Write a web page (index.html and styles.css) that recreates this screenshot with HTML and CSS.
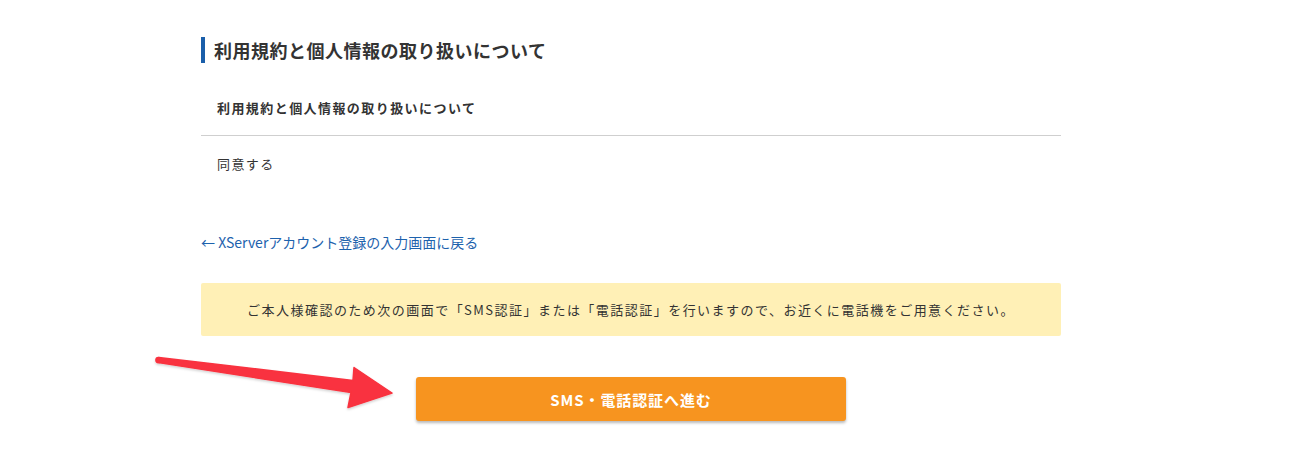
FILE: index.html
```html
<!DOCTYPE html>
<html lang="ja">
<head>
<meta charset="utf-8">
<title>利用規約と個人情報の取り扱いについて</title>
<link rel="stylesheet" href="styles.css">
</head>
<body>
<main class="page">
  <section class="terms">
    <h2 class="section-title">利用規約と個人情報の取り扱いについて</h2>
    <div class="terms-table">
      <div class="terms-row terms-head">利用規約と個人情報の取り扱いについて</div>
      <div class="terms-row terms-value">同意する</div>
    </div>
  </section>
  <a class="back-link" href="#">← XServerアカウント登録の入力画面に戻る</a>
  <div class="notice">ご本人様確認のため次の画面で「SMS認証」または「電話認証」を行いますので、お近くに電話機をご用意ください。</div>
  <div class="actions">
    <button class="submit" type="button">SMS・電話認証へ進む</button>
  </div>
</main>
<svg class="annotation" width="1294" height="475" viewBox="0 0 1294 475" aria-hidden="true">
  <defs>
    <filter id="sh" x="-10%" y="-30%" width="120%" height="160%">
      <feDropShadow dx="0" dy="1.5" stdDeviation="1.2" flood-color="#000" flood-opacity="0.18"/>
    </filter>
  </defs>
  <g filter="url(#sh)" fill="#f9323f" stroke="#f9323f" stroke-width="1.5" stroke-linejoin="round">
    <circle cx="158.5" cy="360" r="2.6"/>
    <polygon points="158.8,357.4 353,380.5 354,367.5 392,393 348,407.5 351,392.5 158.2,362.6"/>
  </g>
</svg>
</body>
</html>
```

FILE: styles.css
```css
html, body {
  margin: 0;
  padding: 0;
  background: #ffffff;
}

body {
  position: relative;
  width: 1294px;
  height: 475px;
  overflow: hidden;
  font-family: "Noto Sans CJK JP", "Noto Sans", "Liberation Sans", sans-serif;
  color: #333333;
}

.page {
  width: 860px;
  margin-left: 201px;
  padding-top: 37px;
  display: flex;
  flex-direction: column;
}

.section-title {
  margin: 0;
  height: 26px;
  line-height: 27px;
  border-left: 4px solid #1a5faa;
  padding-left: 9px;
  font-size: 18px;
  font-weight: 700;
  letter-spacing: 0.5px;
  color: #333333;
}

.terms-table {
  margin-top: 16px;
  display: flex;
  flex-direction: column;
}

.terms-row {
  height: 56px;
  display: flex;
  align-items: center;
  padding-left: 16px;
  font-size: 13px;
  letter-spacing: 0.11em;
  color: #333333;
}

.terms-head {
  font-weight: 700;
  border-bottom: 1px solid #cfcfcf;
}

.terms-value {
  font-weight: 400;
  height: 54px;
}

.back-link {
  margin-top: 42px;
  align-self: flex-start;
  line-height: 20px;
  font-size: 14px;
  color: #1d62ad;
  text-decoration: none;
  letter-spacing: 0;
}

.notice {
  margin-top: 31px;
  height: 53px;
  display: flex;
  align-items: center;
  justify-content: center;
  background: #fff0b6;
  border-radius: 2px;
  font-size: 13px;
  letter-spacing: 0.113em;
  color: #333333;
}

.actions {
  margin-top: 41px;
  display: flex;
  justify-content: center;
}

.submit {
  width: 430px;
  height: 44px;
  border: none;
  border-radius: 3px;
  background: #f7941f;
  color: #ffffff;
  font-family: "Noto Sans CJK JP", "Noto Sans", "Liberation Sans", sans-serif;
  font-size: 15px;
  font-weight: 700;
  letter-spacing: 0.06em;
  box-shadow: 0 2px 3px rgba(0, 0, 0, 0.28);
  cursor: pointer;
}

.annotation {
  position: absolute;
  left: 0;
  top: 0;
  pointer-events: none;
}
```
